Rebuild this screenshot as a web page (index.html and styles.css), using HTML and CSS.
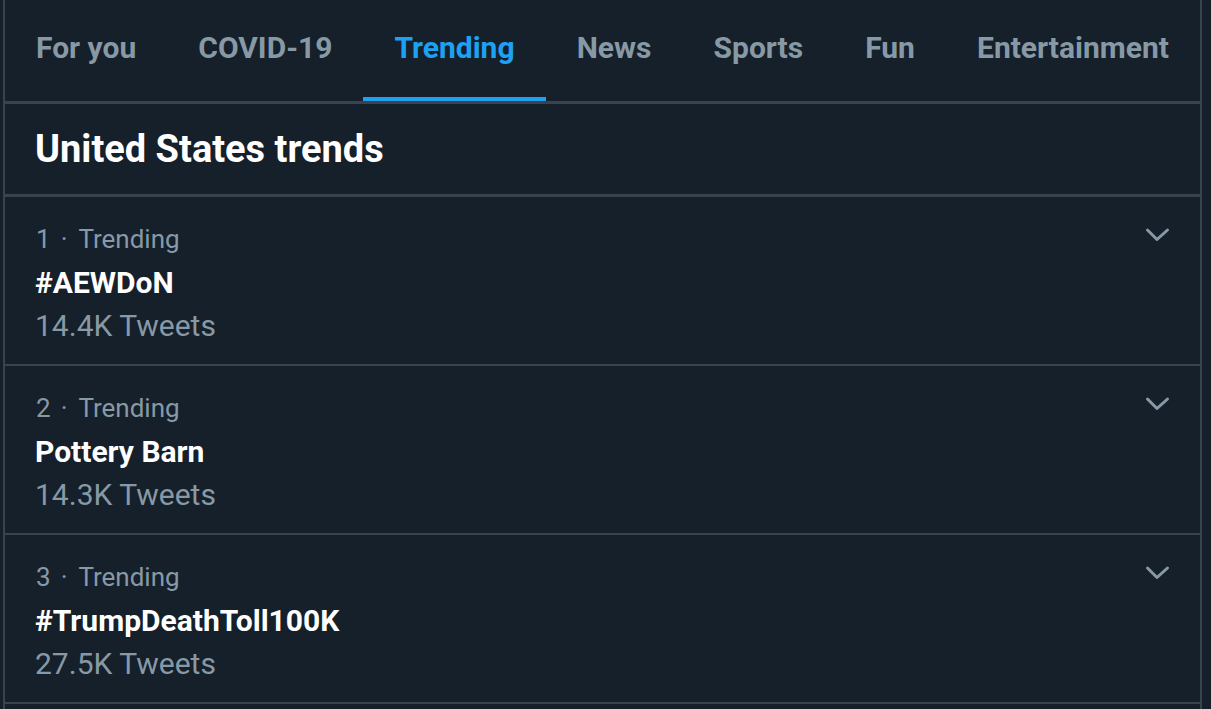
FILE: index.html
```html
<!DOCTYPE html>
<html>
<head>
<meta charset="utf-8">
<link rel="stylesheet" href="styles.css">
</head>
<body>
<div class="panel">
  <nav class="tabs">
    <div class="tab">For you</div>
    <div class="tab">COVID-19</div>
    <div class="tab active">Trending</div>
    <div class="tab">News</div>
    <div class="tab">Sports</div>
    <div class="tab">Fun</div>
    <div class="tab">Entertainment</div>
  </nav>
  <header class="header">United States trends</header>
  <div class="row">
    <div class="info">
      <div class="meta">1<span class="dot">·</span>Trending</div>
      <div class="title">#AEWDoN</div>
      <div class="count">14.4K Tweets</div>
    </div>
    <svg class="chev" viewBox="0 0 26 16" width="26" height="16"><path d="M3.5 3 L13 12.5 L23.5 3" /></svg>
  </div>
  <div class="row">
    <div class="info">
      <div class="meta">2<span class="dot">·</span>Trending</div>
      <div class="title">Pottery Barn</div>
      <div class="count">14.3K Tweets</div>
    </div>
    <svg class="chev" viewBox="0 0 26 16" width="26" height="16"><path d="M3.5 3 L13 12.5 L23.5 3" /></svg>
  </div>
  <div class="row">
    <div class="info">
      <div class="meta">3<span class="dot">·</span>Trending</div>
      <div class="title">#TrumpDeathToll100K</div>
      <div class="count">27.5K Tweets</div>
    </div>
    <svg class="chev" viewBox="0 0 26 16" width="26" height="16"><path d="M3.5 3 L13 12.5 L23.5 3" /></svg>
  </div>
</div>
</body>
</html>
```

FILE: styles.css
```css
html, body {
  margin: 0;
  padding: 0;
  background: #15202b;
  height: 100%;
  overflow: hidden;
}
body {
  font-family: Roboto, "Liberation Sans", sans-serif;
}
.panel {
  margin-left: 3px;
  width: 1195px;
  border-left: 2px solid #38444d;
  border-right: 2px solid #38444d;
  min-height: 720px;
}
.tabs {
  display: flex;
  height: 101px;
  border-bottom: 3px solid #38444d;
}
.tab {
  flex: 1 1 auto;
  display: flex;
  align-items: center;
  justify-content: center;
  padding: 0 0 7px;
  font-size: 30px;
  font-weight: 700;
  color: #8899a6;
  white-space: nowrap;
}
.tab.active {
  color: #1da1f2;
  box-shadow: inset 0 -4px 0 #1da1f2;
}
.header {
  height: 90px;
  display: flex;
  align-items: center;
  padding-left: 30px;
  font-size: 38px;
  font-weight: 700;
  color: #ffffff;
  border-bottom: 3px solid #38444d;
}
.row {
  display: flex;
  align-items: flex-start;
  height: 169px;
  box-sizing: border-box;
  padding: 22px 30px 0 30px;
  border-bottom: 2px solid #38444d;
}
.info {
  flex: 1 1 auto;
}
.meta {
  font-size: 26px;
  line-height: 41px;
  color: #8899a6;
  padding-left: 1px;
}
.dot {
  margin: 0 11px 0 10px;
}
.title {
  font-size: 30px;
  line-height: 44px;
  font-weight: 700;
  color: #ffffff;
  padding-top: 1px;
}
.count {
  font-size: 30px;
  line-height: 44px;
  color: #8899a6;
  margin-top: -1px;
}
.chev {
  flex: none;
  margin-top: 8px;
}
.chev path {
  fill: none;
  stroke: #8899a6;
  stroke-width: 3;
  stroke-linecap: round;
  stroke-linejoin: round;
}
```
